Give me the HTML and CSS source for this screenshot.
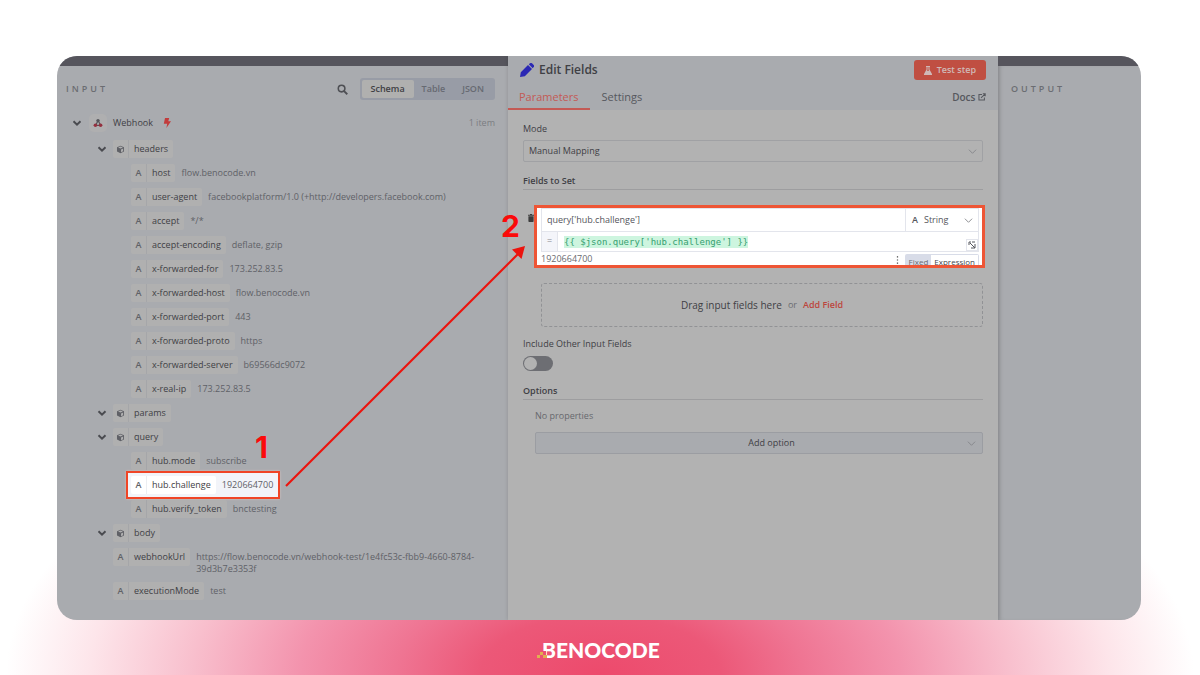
FILE: index.html
```html
<!DOCTYPE html>
<html lang="en">
<head>
  <meta charset="UTF-8" />
  <meta name="viewport" content="width=device-width, initial-scale=1.0"/>
  <title>Benocode - Edit Fields</title>
  <link rel="stylesheet" href="styles.css">
</head>
<body>
  <!-- Shared icons -->
  <svg class="icon-defs" aria-hidden="true">
    <symbol id="chevron" viewBox="0 0 10 10"><path d="M1.5 3.2 5 6.6 8.5 3.2" fill="none" stroke="currentColor" stroke-width="2"/></symbol>
    <symbol id="chevron-thin" viewBox="0 0 10 10"><path d="M1 3 5 7 9 3" fill="none" stroke="currentColor" stroke-width="1"/></symbol>
    <symbol id="cube" viewBox="0 0 10 10">
      <path d="M5 .8 8.9 2.5v4.8L5 9.2 1.1 7.3V2.5z" fill="currentColor"/>
      <path d="M2.3 2.8 5 1.8l2.7 1L5 3.9zM5.6 5v3l2.3-1.1V4z" fill="#afafb0"/>
    </symbol>
  </svg>

  <main class="frame">
    <section class="panel input-panel">
      <div class="panel-head">
        <h2>INPUT</h2>
        <button class="search" aria-label="Search">
          <svg viewBox="0 0 12 12"><circle cx="5" cy="5" r="3.6" fill="none" stroke="currentColor" stroke-width="1.7"/><path d="m7.7 7.7 3.5 3.5" stroke="currentColor" stroke-width="2"/></svg>
        </button>
        <div class="segment">
          <button class="active">Schema</button>
          <button>Table</button>
          <button>JSON</button>
        </div>
      </div>

      <div class="root-row">
        <svg class="chev"><use href="#chevron"/></svg>
        <span class="node-icon">
          <svg viewBox="0 0 10 10"><path d="M5 2.8 2.8 7M5.2 2.8l2.2 4M2.6 7.3h4.8" stroke="#55555a" stroke-width="1.2"/><circle cx="5" cy="2.6" r="1.7" fill="#55555a"/><circle cx="2.4" cy="7.2" r="1.8" fill="#94303f"/><circle cx="7.6" cy="7.2" r="1.8" fill="#94303f"/></svg>
        </span>
        <span>Webhook</span>
        <svg class="bolt" viewBox="0 0 8 10"><path d="M2 0h4.2L5.3 3.2H8L3.4 10l.8-4.2H.8z" fill="#c23c3c"/></svg>
        <span class="count">1 item</span>
      </div>

      <ul class="tree">
        <li>
          <div class="row group"><svg class="chev"><use href="#chevron"/></svg><span class="pill"><i><svg><use href="#cube"/></svg></i><b>headers</b></span></div>
          <ul>
            <li class="row"><span class="pill"><i>A</i><b>host</b></span><span class="value">flow.benocode.vn</span></li>
            <li class="row"><span class="pill"><i>A</i><b>user-agent</b></span><span class="value">facebookplatform/1.0 (+http://developers.facebook.com)</span></li>
            <li class="row"><span class="pill"><i>A</i><b>accept</b></span><span class="value">*/*</span></li>
            <li class="row"><span class="pill"><i>A</i><b>accept-encoding</b></span><span class="value">deflate, gzip</span></li>
            <li class="row"><span class="pill"><i>A</i><b>x-forwarded-for</b></span><span class="value">173.252.83.5</span></li>
            <li class="row"><span class="pill"><i>A</i><b>x-forwarded-host</b></span><span class="value">flow.benocode.vn</span></li>
            <li class="row"><span class="pill"><i>A</i><b>x-forwarded-port</b></span><span class="value">443</span></li>
            <li class="row"><span class="pill"><i>A</i><b>x-forwarded-proto</b></span><span class="value">https</span></li>
            <li class="row"><span class="pill"><i>A</i><b>x-forwarded-server</b></span><span class="value">b69566dc9072</span></li>
            <li class="row"><span class="pill"><i>A</i><b>x-real-ip</b></span><span class="value">173.252.83.5</span></li>
          </ul>
        </li>
        <li>
          <div class="row group"><svg class="chev"><use href="#chevron"/></svg><span class="pill"><i><svg><use href="#cube"/></svg></i><b>params</b></span></div>
        </li>
        <li>
          <div class="row group"><svg class="chev"><use href="#chevron"/></svg><span class="pill"><i><svg><use href="#cube"/></svg></i><b>query</b></span></div>
          <ul>
            <li class="row"><span class="pill"><i>A</i><b>hub.mode</b></span><span class="value">subscribe</span></li>
            <li class="row marked"><span class="pill"><i>A</i><b>hub.challenge</b></span><span class="value">1920664700</span></li>
            <li class="row"><span class="pill"><i>A</i><b>hub.verify_token</b></span><span class="value">bnctesting</span></li>
          </ul>
        </li>
        <li>
          <div class="row group"><svg class="chev"><use href="#chevron"/></svg><span class="pill"><i><svg><use href="#cube"/></svg></i><b>body</b></span></div>
        </li>
        <li class="row"><span class="pill"><i>A</i><b>webhookUrl</b></span><span class="value">https://flow.benocode.vn/webhook-test/1e4fc53c-fbb9-4660-8784-39d3b7e3353f</span></li>
        <li class="row"><span class="pill"><i>A</i><b>executionMode</b></span><span class="value">test</span></li>
      </ul>
    </section>

    <section class="editor">
      <header>
        <div class="title-bar">
          <svg class="pencil" viewBox="0 0 14 14"><path d="M0 14l.8-4.8L8 2l4 4-7.2 7.2zM8.8 1.3 10 .3a1.4 1.4 0 0 1 2 0l1.7 1.7a1.4 1.4 0 0 1 0 2L12.7 5.2z" fill="#2b28b4"/></svg>
          <h1>Edit Fields</h1>
          <button class="test-step">
            <svg viewBox="0 0 8 9"><path d="M2 0h4v1h-.5v2.5L8 8a.7.7 0 0 1-.6 1H.6A.7.7 0 0 1 0 8l2.5-4.500V1H2z" fill="currentColor"/><path d="M3.5 1h1v2.5l.7 1.200H2.800l.7-1.200z" fill="#c04f42"/></svg>
            Test step
          </button>
        </div>
        <nav class="tabs">
          <a class="active" href="#parameters">Parameters</a>
          <a href="#settings">Settings</a>
          <a class="docs" href="#docs">Docs
            <svg viewBox="0 0 10 10"><path d="M5 2H1.2v6.8H8V5.5M3.8 6.2 9 1M6 1h3v3" fill="none" stroke="currentColor" stroke-width="1.3"/></svg>
          </a>
        </nav>
      </header>

      <form class="form" id="parameters">
        <label for="mode">Mode</label>
        <div class="select">
          <select id="mode"><option>Manual Mapping</option></select>
          <svg><use href="#chevron-thin"/></svg>
        </div>

        <h3>Fields to Set</h3>
        <div class="assignment">
          <button type="button" class="trash" aria-label="Delete field">
            <svg viewBox="0 0 6 8"><path d="M0 .8h2V0h2v.8h2v1H0zM.4 2.3h5.200V7.200a.8.8 0 0 1-.8.8H1.200a.8.8 0 0 1-.8-.8z" fill="#3c3c3c"/></svg>
          </button>
          <div class="field-box">
            <div class="field-top">
              <input type="text" value="query['hub.challenge']" aria-label="Field name">
              <div class="type">
                <b>A</b>
                <select aria-label="Field type"><option>String</option></select>
                <svg><use href="#chevron-thin"/></svg>
              </div>
            </div>
            <div class="expression">
              <span class="equals">=</span>
              <code>{{ $json.query['hub.challenge'] }}</code>
              <button type="button" class="expand" aria-label="Open editor">
                <svg viewBox="0 0 8 8"><path d="M1 4V1h2M2 2l5 5M7 3v4H3M4 1h3" fill="none" stroke="#55565c" stroke-width="1"/></svg>
              </button>
            </div>
            <div class="field-result">
              <span>1920664700</span>
              <svg viewBox="0 0 3 9"><path d="M.8 1h1.4M.8 4.5h1.4M.8 8h1.4" stroke="#444" stroke-width="1.4"/></svg>
              <div class="switcher">
                <button type="button">Fixed</button>
                <button type="button" class="active">Expression</button>
              </div>
            </div>
          </div>
        </div>

        <div class="drop-zone">Drag input fields here <span>or</span> <a href="#add">Add Field</a></div>

        <label for="include">Include Other Input Fields</label>
        <input type="checkbox" class="toggle" id="include">

        <h3>Options</h3>
        <div class="options">
          <p>No properties</p>
          <button type="button" class="add-option">Add option <svg><use href="#chevron-thin"/></svg></button>
        </div>
      </form>
    </section>

    <section class="panel output-panel">
      <div class="panel-head"><h2>OUTPUT</h2></div>
    </section>

    <!-- Steps drawn over the editor -->
    <div class="step step-one">1</div>
    <div class="step step-two">2</div>
    <svg class="arrow" viewBox="0 0 242 244">
      <path d="M2 241 234 9" stroke="#ec130d" stroke-width="2.2"/>
      <path d="M241 1 237.5 14 228 4.5z" fill="#ec130d"/>
    </svg>
  </main>

  <footer>
    <div class="logo">
      <span>BENOCODE</span>
      <svg viewBox="0 0 12 8"><path d="M5 1h4v7H5z" fill="#ed5072"/><path d="M0 5h3v3H0zM3 2h3v3H3zM6 5h4v3H6z" fill="#e0b050"/></svg>
    </div>
  </footer>
</body>
</html>
```

FILE: styles.css
```css
* {
  box-sizing: border-box;
}

body {
  margin: 0;
  min-height: 100vh;
  padding: 56px 59px 0 57px;
  display: flex;
  flex-direction: column;
  font-family: "Open Sans", sans-serif;
  font-size: 9px;
  line-height: 12px;
  color: #3f4045;
  background: radial-gradient(ellipse 50% 300px at 50% 100%, #ed4a6c 0%, #ec5878 20%, #ef7593 34%, #f393ad 50%, #f8bfcd 68%, #fde5ea 85%, #ffffff 99%) no-repeat #fff;
}

h1, h2, h3, p, ul {
  margin: 0;
  padding: 0;
}

ul {
  list-style: none;
}

button, input, select {
  font: inherit;
  color: inherit;
  border: none;
  background: none;
  padding: 0;
  margin: 0;
}

a {
  color: inherit;
  text-decoration: none;
}

.icon-defs {
  position: absolute;
  width: 0;
  height: 0;
}

.frame {
  position: relative;
  flex: 1;
  display: grid;
  grid-template-columns: 451fr 490fr 143fr;
  border-radius: 20px;
  overflow: hidden;
  background: #a9abaf;
}

/* Side panels */
.panel {
  border-top: 10px solid #56555d;
}

.input-panel {
  padding: 12px 13px 0 9px;
}

.output-panel {
  padding: 12px 13px;
  box-shadow: inset 4px 0 4px -2px rgba(0,0,0,0.12);
}

.panel-head {
  display: flex;
  align-items: center;
  height: 22px;
}

.panel-head h2 {
  font-size: 9px;
  font-weight: 600;
  letter-spacing: 3px;
  color: #6b6d72;
}

.search {
  margin-left: auto;
  margin-right: 12px;
  width: 11px;
  height: 11px;
  color: #4e4f54;
}

.search svg {
  display: block;
}

.segment {
  display: flex;
  height: 22px;
  padding: 2px;
  border-radius: 3px;
  background: #989ca6;
  font-weight: 600;
  color: #676a72;
}

.segment button {
  padding: 0 9px 0 8px;
  border-radius: 2px;
}

.segment .active {
  background: #b0b0af;
  color: #3f4045;
}

.root-row {
  display: flex;
  align-items: center;
  gap: 6px;
  height: 20px;
  margin: 13px 0 4px 6px;
}

.chev {
  width: 10px;
  height: 10px;
  flex: none;
  color: #4a4b50;
}

.node-icon {
  display: flex;
  align-items: center;
  justify-content: center;
  width: 18px;
  height: 18px;
  margin-left: 1px;
  border-radius: 5px;
  background: #afafb0;
}

.node-icon svg {
  width: 10px;
  height: 10px;
}

.bolt {
  width: 8px;
  height: 10px;
  margin-left: 4px;
}

.count {
  margin-left: auto;
  color: #7b7d82;
}

.tree {
  padding-left: 47px;
}

.tree ul {
  padding-left: 18px;
}

.row {
  display: flex;
  align-items: flex-start;
  min-height: 24px;
}

.row.group {
  margin-left: -16px;
}

.group .chev {
  margin: 7px 6px 0 0;
}

.pill {
  display: flex;
  flex: none;
  height: 18px;
  margin-top: 3px;
  line-height: 18px;
  border-radius: 2px;
  background: #b0b0b0;
}

.pill i {
  display: flex;
  align-items: center;
  justify-content: center;
  width: 16px;
  font-style: normal;
  font-weight: 600;
  color: #606167;
  border-right: 1px solid #a5a6a9;
}

.pill i svg {
  width: 9px;
  height: 9px;
}

.pill b {
  padding: 0 5px;
  font-weight: 400;
}

.value {
  padding: 6px 10px 4px 6px;
  color: #5f6167;
}

.row.marked {
  width: fit-content;
  height: 28px;
  margin: -2px 0 -2px -5px;
  padding: 0 5px 0 3px;
  border: 2px solid #f04526;
  box-shadow: 0 0 2px #d8c4c2;
  background: #f2f4f9;
}

.marked .pill {
  background: #fff;
}

.marked .pill i {
  border-color: #eceef2;
}

.marked .value {
  padding-right: 0;
}

/* Editor */
.editor {
  background: #b2b2b2;
  box-shadow: 0 0 4px rgba(0,0,0,0.15);
}

.editor header {
  height: 54px;
  background: #a9abaf;
}

.title-bar {
  display: flex;
  align-items: center;
  height: 28px;
  padding: 0 12px;
}

.pencil {
  width: 14px;
  height: 14px;
  margin-right: 5px;
}

h1 {
  font-size: 12px;
  font-weight: 600;
  line-height: 16px;
}

.test-step {
  display: flex;
  align-items: center;
  gap: 5px;
  height: 20px;
  margin-left: auto;
  padding: 0 10px;
  border-radius: 3px;
  background: #c04f42;
  color: #d0b9b7;
  font-weight: 600;
}

.test-step svg {
  width: 8px;
  height: 9px;
}

.tabs {
  display: flex;
  gap: 1px;
  height: 26px;
  padding-right: 12px;
  font-size: 11px;
  line-height: 26px;
  font-weight: 500;
  color: #56585e;
}

.tabs a {
  padding: 0 11px;
}

.tabs .active {
  color: #c35a55;
  border-bottom: 2px solid #c35a55;
}

.tabs .docs {
  margin-left: auto;
  padding: 0;
  font-size: 10px;
  font-weight: 600;
}

.docs svg {
  width: 8px;
  height: 8px;
}

.form {
  padding: 13px 15px;
}

.form label {
  display: block;
}

.select {
  display: flex;
  align-items: center;
  height: 22px;
  margin: 5px 0 13px;
  padding: 0 5px;
  border: 1px solid #a0a1a4;
  border-radius: 2px;
}

select {
  appearance: none;
  flex: 1;
  min-width: 0;
}

.select svg, .type svg, .add-option svg {
  width: 9px;
  height: 9px;
  color: #85868a;
}

h3 {
  font-size: 9px;
  font-weight: 600;
  line-height: 12px;
  padding-bottom: 2px;
  border-bottom: 1px solid #9d9d9f;
}

.assignment {
  display: flex;
  margin: 15px -2px 15px 0;
}

.trash {
  width: 11px;
  height: 8px;
  margin-top: 9px;
}

.trash svg {
  display: block;
  width: 6px;
  height: 8px;
  margin-left: auto;
}

.field-box {
  flex: 1;
  height: 63px;
  padding: 0 3px 0 4px;
  overflow: hidden;
  border: 3px solid #ee5535;
  background: #fff;
  color: #55565c;
}

.field-top {
  display: flex;
  height: 24px;
  border: 1px solid #e3e5ec;
}

.field-top input {
  flex: 1;
  min-width: 0;
  padding-left: 5px;
}

.type {
  display: flex;
  align-items: center;
  gap: 6px;
  width: 73px;
  padding: 0 5px 0 6px;
  border-left: 1px solid #e3e5ec;
}

.type b {
  font-weight: 600;
}

.expression {
  display: flex;
  align-items: center;
  height: 20px;
  border: 1px solid #e3e5ec;
  border-top: none;
}

.equals {
  width: 16px;
  height: 19px;
  line-height: 18px;
  text-align: center;
  color: #85878d;
  background: #f4f5fa;
  border-right: 1px solid #e3e5ec;
}

code {
  margin-left: 6px;
  font-family: "DejaVu Sans Mono", monospace;
  font-size: 9px;
  color: #35a070;
  background: #cdf5df;
}

.expand {
  display: flex;
  align-items: center;
  justify-content: center;
  align-self: flex-end;
  width: 12px;
  height: 12px;
  margin-left: auto;
  border: 1px solid #e3e5ec;
}

.expand svg {
  flex: none;
  width: 8px;
  height: 8px;
}

.field-result {
  display: flex;
  align-items: flex-start;
  line-height: 14px;
  color: #6a6b70;
}

.field-result svg {
  width: 3px;
  height: 8px;
  margin: 4px 6px 0 auto;
}

.switcher {
  display: flex;
  height: 16px;
  margin-top: 2px;
  padding: 1px;
  border-radius: 2px;
  background: #d8dce8;
  font-size: 8px;
  line-height: 12px;
}

.switcher button {
  padding: 0 3px;
}

.switcher .active {
  background: #fff;
  color: #44454a;
}

.drop-zone {
  display: flex;
  align-items: center;
  justify-content: center;
  gap: 6px;
  height: 44px;
  margin: 0 0 11px 18px;
  border: 1px dashed #919295;
  border-radius: 3px;
  font-size: 10px;
}

.drop-zone span {
  font-size: 9px;
  color: #6b6c70;
}

.drop-zone a {
  color: #bd463d;
  font-weight: 600;
  font-size: 9px;
}

.toggle {
  appearance: none;
  display: block;
  width: 30px;
  height: 15px;
  margin: 6px 0 14px;
  padding: 1px;
  border-radius: 8px;
  background: #6d6e73;
}

.toggle::before {
  content: "";
  display: block;
  width: 13px;
  height: 13px;
  border-radius: 50%;
  background: #b2b2b2;
}

.options {
  padding: 10px 0 0 12px;
}

.options p {
  color: #67686d;
}

.add-option {
  display: grid;
  grid-template-columns: 1fr auto;
  align-items: center;
  width: 100%;
  height: 22px;
  margin-top: 10px;
  padding: 0 6px 0 40px;
  border: 1px solid #9b9da2;
  border-radius: 2px;
  background: #a9abaf;
}

/* Numbered steps and arrow */
.step {
  position: absolute;
  font-family: Inter, sans-serif;
  font-size: 30px;
  line-height: 30px;
  font-weight: 700;
  color: #fb0a0a;
}

.step-one {
  left: 198px;
  top: 376px;
}

.step-two {
  left: 444px;
  top: 155px;
}

.arrow {
  position: absolute;
  left: 227px;
  top: 189px;
  width: 242px;
  height: 244px;
}

/* Footer */
footer {
  display: flex;
  align-items: center;
  justify-content: center;
  height: 55px;
  padding: 5px 0 0 4px;
}

.logo {
  position: relative;
  font-family: Lato, sans-serif;
  font-size: 21px;
  line-height: 24px;
  font-weight: 900;
  color: #fff;
}

.logo svg {
  position: absolute;
  left: -5px;
  bottom: 4px;
  width: 12px;
  height: 8px;
}
```
